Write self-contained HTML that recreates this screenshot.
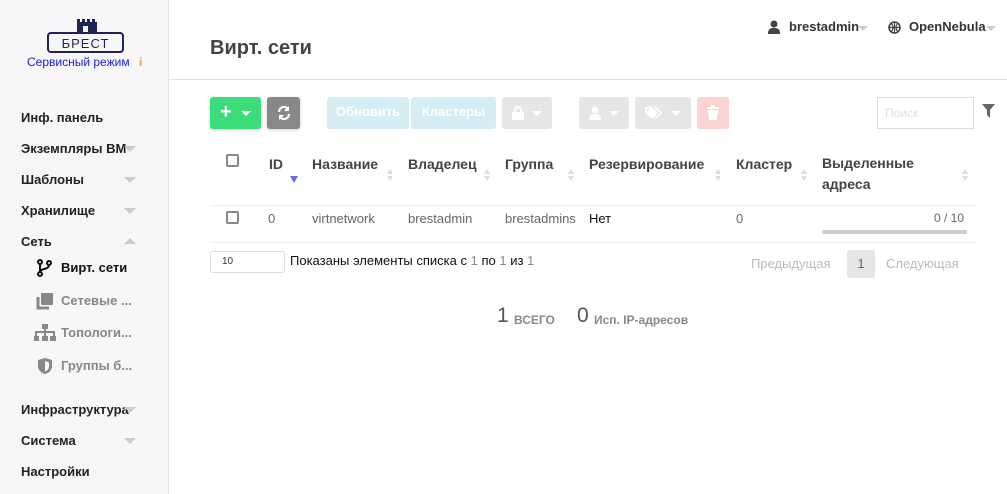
<!DOCTYPE html>
<html><head><meta charset="utf-8"><style>
*{box-sizing:border-box;margin:0;padding:0}
body{width:1007px;height:494px;overflow:hidden;background:#fff;font-family:"Liberation Sans","DejaVu Sans",sans-serif;position:relative;color:#333}
.abs{position:absolute}
#side{left:0;top:0;width:169px;height:494px;background:#f7f7f7;border-right:1px solid #e3e3e3}
.menu{position:absolute;left:21px;font-size:13px;font-weight:bold;color:#222}
.car{position:absolute;left:124px;width:0;height:0;border-left:6px solid transparent;border-right:6px solid transparent;border-top:6px solid #ccc}
.caru{border-top:none;border-bottom:6px solid #ccc}
.sub{position:absolute;left:61px;font-size:13px;font-weight:bold;color:#888}
.btn{position:absolute;top:97px;height:32px;border-radius:3px}
.th{position:absolute;top:156px;font-size:14px;font-weight:bold;color:#444}
.sort{position:absolute;top:169px;width:6px;font-size:0}
.sort:before{content:"";position:absolute;left:0;top:0;border-left:3px solid transparent;border-right:3px solid transparent;border-bottom:5px solid #ddd}
.sort:after{content:"";position:absolute;left:0;top:7px;border-left:3px solid transparent;border-right:3px solid transparent;border-top:5px solid #ddd}
.td{position:absolute;top:211px;font-size:13px;color:#666}
.cb{position:absolute;width:13px;height:13px;border:2px solid #888;border-radius:2px}
</style></head><body>
<div id="side" class="abs">
 <svg class="abs" style="left:47px;top:18px" width="77" height="36" viewBox="0 0 77 36">
  <path d="M26 1h3v3h2V1h3v3h2V1h3v3h2V1h3v3h2v11H26z" fill="#1c2556" transform="translate(4,0)"/>
  <rect x="36" y="8" width="5" height="7" fill="#f7f7f7"/>
  <rect x="1" y="15" width="75" height="19" rx="3" fill="none" stroke="#1c2556" stroke-width="2"/>
  <text x="38.5" y="30" text-anchor="middle" font-family="Liberation Sans" font-size="13" fill="#1c2556" letter-spacing="1">БРЕСТ</text>
 </svg>
 <div class="abs" style="left:27px;top:55px;font-size:12px;color:#1a1ae6">Сервисный режим</div>
 <div class="abs" style="left:139px;top:55px;font-size:12px;color:#f39c5a;font-weight:bold">i</div>
 <div class="menu" style="top:110px">Инф. панель</div>
 <div class="menu" style="top:141px">Экземпляры ВМ</div><div class="car" style="top:146px"></div>
 <div class="menu" style="top:172px">Шаблоны</div><div class="car" style="top:177px"></div>
 <div class="menu" style="top:203px">Хранилище</div><div class="car" style="top:208px"></div>
 <div class="menu" style="top:234px">Сеть</div><div class="car caru" style="top:238px"></div>
 <svg class="abs" style="left:37px;top:259px" width="16" height="18" viewBox="0 0 16 18"><g fill="none" stroke="#111" stroke-width="2"><circle cx="3" cy="3" r="2"/><circle cx="3" cy="15" r="2"/><circle cx="12" cy="4" r="2"/><path d="M3 5v8M12 6c0 5-9 3-9 7"/></g></svg>
 <div class="sub" style="top:260px;color:#111">Вирт. сети</div>
 <svg class="abs" style="left:36px;top:292px" width="18" height="18"><rect x="5" y="1" width="12" height="12" rx="1" fill="#888"/><path d="M2 5v11h11" fill="none" stroke="#888" stroke-width="3"/></svg>
 <div class="sub" style="top:293px">Сетевые ...</div>
 <svg class="abs" style="left:34px;top:324px" width="22" height="18"><g fill="#888"><rect x="8" y="0" width="6" height="5"/><rect x="1" y="7" width="20" height="2"/><rect x="1" y="7" width="2" height="5"/><rect x="10" y="5" width="2" height="7"/><rect x="19" y="7" width="2" height="5"/><rect x="0" y="12" width="5" height="5"/><rect x="8" y="12" width="6" height="5"/><rect x="16" y="12" width="6" height="5"/></g></svg>
 <div class="sub" style="top:325px">Топологи...</div>
 <svg class="abs" style="left:37px;top:357px" width="16" height="18"><path d="M8 1L15 3v6c0 4-3 7-7 8C4 16 1 13 1 9V3z" fill="#888"/><path d="M8 4l4 1.5v4c0 2.5-2 4.5-4 5z" fill="#f7f7f7"/></svg>
 <div class="sub" style="top:358px">Группы б...</div>
 <div class="menu" style="top:402px">Инфраструктура</div><div class="car" style="top:407px"></div>
 <div class="menu" style="top:433px">Система</div><div class="car" style="top:438px"></div>
 <div class="menu" style="top:464px">Настройки</div>
</div>
<div class="abs" style="left:169px;top:79px;width:838px;height:1px;background:#e0e0e0"></div>
<div class="abs" style="left:210px;top:37px;font-size:20px;font-weight:bold;color:#444">Вирт. сети</div>
<svg class="abs" style="left:768px;top:20px" width="12" height="14"><circle cx="6" cy="4" r="3.5" fill="#444"/><path d="M0 14c0-5 2-6 6-6s6 1 6 6z" fill="#444"/></svg>
<div class="abs" style="left:789px;top:19px;font-size:13px;font-weight:bold;color:#333">brestadmin</div>
<div class="abs" style="left:858px;top:26px;border-left:5px solid transparent;border-right:5px solid transparent;border-top:5px solid #ccc"></div>
<svg class="abs" style="left:888px;top:21px" width="13" height="13"><circle cx="6.5" cy="6.5" r="5.5" fill="none" stroke="#444" stroke-width="1.6"/><path d="M1 6.5h11M6.5 1v11M3.5 2.5c2 3 2 5 0 8M9.5 2.5c-2 3-2 5 0 8" fill="none" stroke="#444" stroke-width="1.2"/></svg>
<div class="abs" style="left:909px;top:19px;font-size:13px;font-weight:bold;color:#333">OpenNebula</div>
<div class="abs" style="left:986px;top:26px;border-left:5px solid transparent;border-right:5px solid transparent;border-top:5px solid #ccc"></div>

<div class="btn" style="left:210px;width:51px;background:#3ddc7a;box-shadow:0 1px 3px rgba(0,0,0,.2)"><div class="abs" style="left:10px;top:4px;color:#fff;font-size:20px;font-weight:bold">+</div><div class="abs" style="left:31px;top:14px;border-left:5px solid transparent;border-right:5px solid transparent;border-top:5px solid #fff"></div></div>
<div class="btn" style="left:267px;width:33px;background:#888;box-shadow:0 1px 3px rgba(0,0,0,.2)"><svg class="abs" style="left:10px;top:9px" width="14" height="14" viewBox="0 0 14 14"><path d="M2 6A5 5 0 0 1 11 3M12 8A5 5 0 0 1 3 11" fill="none" stroke="#fff" stroke-width="2.2"/><path d="M12 0v5H7zM2 14V9h5z" fill="#fff"/></svg></div>
<div class="btn" style="left:327px;width:82px;background:#d5eef3;color:#fff;font-size:13px;font-weight:bold;text-align:center;line-height:30px">Обновить</div>
<div class="btn" style="left:411px;width:85px;background:#d5eef3;color:#fff;font-size:13px;font-weight:bold;text-align:center;line-height:30px">Кластеры</div>
<div class="btn" style="left:502px;width:50px;background:#e6e6e6"><svg class="abs" style="left:10px;top:9px" width="12" height="14"><rect x="0" y="6" width="12" height="8" fill="#fff"/><path d="M3 6V4a3 3 0 0 1 6 0v2" fill="none" stroke="#fff" stroke-width="2"/></svg><div class="abs" style="left:30px;top:14px;border-left:5px solid transparent;border-right:5px solid transparent;border-top:5px solid #fff"></div></div>
<div class="btn" style="left:579px;width:50px;background:#e6e6e6"><svg class="abs" style="left:10px;top:9px" width="12" height="14"><circle cx="6" cy="4" r="3.5" fill="#fff"/><path d="M0 14c0-5 2-6 6-6s6 1 6 6z" fill="#fff"/></svg><div class="abs" style="left:30px;top:14px;border-left:5px solid transparent;border-right:5px solid transparent;border-top:5px solid #fff"></div></div>
<div class="btn" style="left:635px;width:56px;background:#e6e6e6"><svg class="abs" style="left:10px;top:9px" width="18" height="14"><path d="M0 1v5l7 7 6-6-7-7z" fill="#fff"/><path d="M9 0l7 7-6 6" fill="none" stroke="#fff" stroke-width="1.5"/><circle cx="3" cy="3.5" r="1.2" fill="#e6e6e6"/></svg><div class="abs" style="left:36px;top:14px;border-left:5px solid transparent;border-right:5px solid transparent;border-top:5px solid #fff"></div></div>
<div class="btn" style="left:697px;width:32px;background:#f9d4d0"><svg class="abs" style="left:10px;top:8px" width="12" height="15"><rect x="0" y="2" width="12" height="2" fill="#fff"/><rect x="4" y="0" width="4" height="2" fill="#fff"/><path d="M1 5h10l-1 10H2z" fill="#fff"/></svg></div>
<div class="abs" style="left:877px;top:97px;width:97px;height:32px;border:1px solid #ddd;font-size:12px;color:#ddd;padding:8px 7px">Поиск</div>
<svg class="abs" style="left:982px;top:104px" width="13" height="14"><path d="M0 0h13L8 6v8L5 11V6z" fill="#666"/></svg>

<div class="cb" style="left:226px;top:154px"></div>
<div class="th" style="left:269px">ID</div>
<div class="abs" style="left:290px;top:176px;border-left:4px solid transparent;border-right:4px solid transparent;border-top:7px solid #6b6bd6"></div>
<div class="th" style="left:312px">Название</div><div class="sort" style="left:387px"></div>
<div class="th" style="left:408px">Владелец</div><div class="sort" style="left:484px"></div>
<div class="th" style="left:505px">Группа</div><div class="sort" style="left:568px"></div>
<div class="th" style="left:589px">Резервирование</div><div class="sort" style="left:715px"></div>
<div class="th" style="left:736px">Кластер</div><div class="sort" style="left:801px"></div>
<div class="th" style="left:822px;line-height:21px;top:153px">Выделенные<br>адреса</div><div class="sort" style="left:962px"></div>
<div class="abs" style="left:210px;top:205px;width:766px;height:1px;background:#eee"></div>
<div class="cb" style="left:226px;top:211px"></div>
<div class="td" style="left:268px">0</div>
<div class="td" style="left:312px">virtnetwork</div>
<div class="td" style="left:408px">brestadmin</div>
<div class="td" style="left:505px">brestadmins</div>
<div class="td" style="left:589px;color:#111">Нет</div>
<div class="td" style="left:736px">0</div>
<div class="td" style="left:934px;font-size:12px">0 / 10</div>
<div class="abs" style="left:822px;top:230px;width:145px;height:4px;border-radius:2px;background:#ccc"></div>
<div class="abs" style="left:210px;top:242px;width:766px;height:1px;background:#eee"></div>
<div class="abs" style="left:210px;top:251px;width:75px;height:22px;border:1px solid #ddd;border-radius:3px;font-size:10px;color:#333;padding:4px 11px">10</div>
<div class="abs" style="left:290px;top:253px;font-size:13px;color:#111">Показаны элементы списка с <span style="color:#888">1</span> по <span style="color:#888">1</span> из <span style="color:#888">1</span></div>
<div class="abs" style="left:751px;top:256px;font-size:13px;color:#bbb">Предыдущая</div>
<div class="abs" style="left:847px;top:250px;width:28px;height:28px;background:#e6e6e6;border-radius:2px;font-size:13px;color:#666;text-align:center;line-height:28px">1</div>
<div class="abs" style="left:886px;top:256px;font-size:13px;color:#bbb">Следующая</div>
<div class="abs" style="left:497px;top:304px;font-size:21px;color:#555">1</div>
<div class="abs" style="left:514px;top:313px;font-size:12px;font-weight:bold;color:#888">ВСЕГО</div>
<div class="abs" style="left:577px;top:304px;font-size:21px;color:#555">0</div>
<div class="abs" style="left:594px;top:313px;font-size:12px;font-weight:bold;color:#888">Исп. IP-адресов</div>
</body></html>
